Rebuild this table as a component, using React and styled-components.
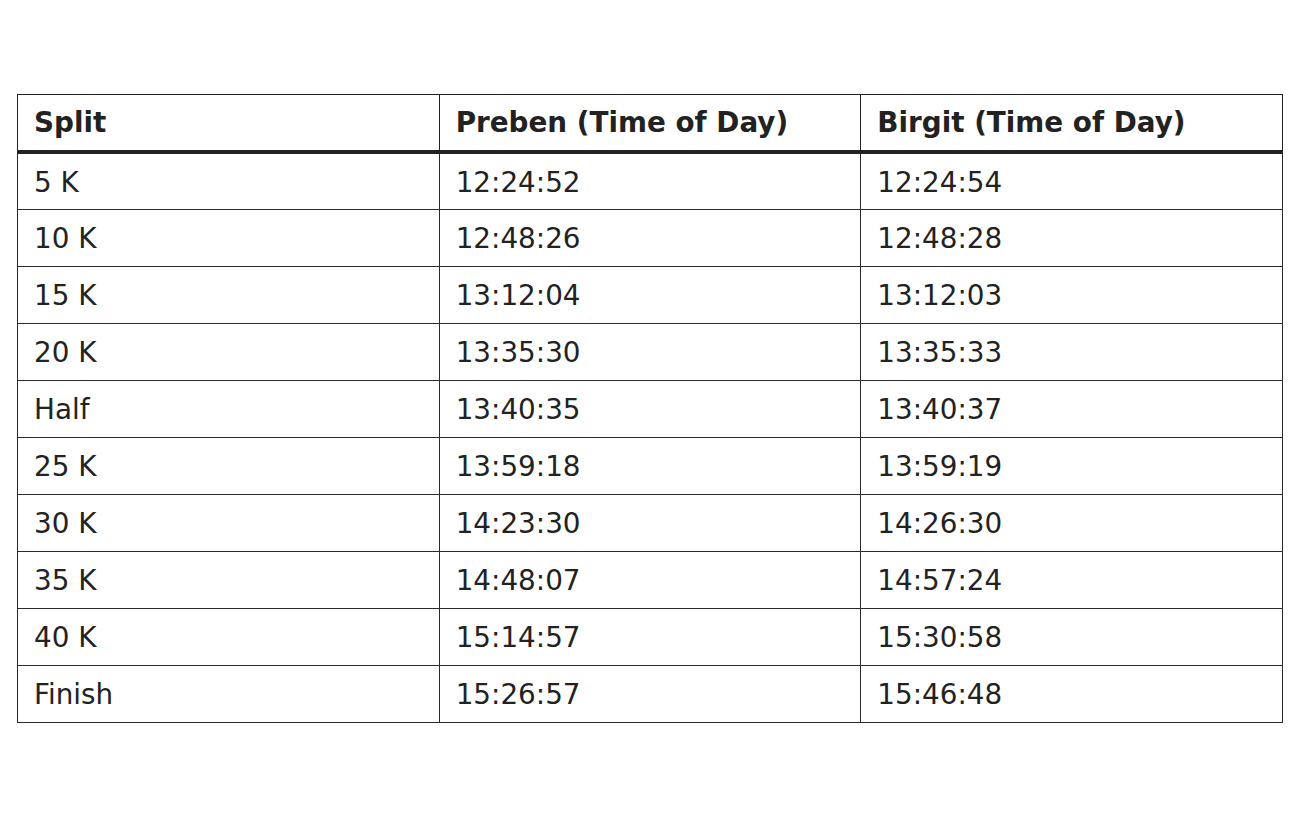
import React from 'react';
import styled, { createGlobalStyle } from 'styled-components';

const GlobalStyle = createGlobalStyle`
  html, body {
    margin: 0;
    padding: 0;
    background: #ffffff;
  }
  body {
    font-family: "DejaVu Sans", Verdana, sans-serif;
    color: #222222;
  }
`;

const splits = [
  ['5 K', '12:24:52', '12:24:54'],
  ['10 K', '12:48:26', '12:48:28'],
  ['15 K', '13:12:04', '13:12:03'],
  ['20 K', '13:35:30', '13:35:33'],
  ['Half', '13:40:35', '13:40:37'],
  ['25 K', '13:59:18', '13:59:19'],
  ['30 K', '14:23:30', '14:26:30'],
  ['35 K', '14:48:07', '14:57:24'],
  ['40 K', '15:14:57', '15:30:58'],
  ['Finish', '15:26:57', '15:46:48'],
];

const Page = styled.div`
  padding: 94px 17px 0;
  height: 817px;
  box-sizing: border-box;
`;

const Table = styled.table`
  width: 100%;
  border-collapse: collapse;
  table-layout: fixed;
  border: 1px solid #222222;
`;

const HeadCell = styled.th`
  text-align: left;
  font-size: 27.8px;
  font-weight: bold;
  height: 55px;
  padding: 0 16px;
  border: 1px solid #222222;
  border-bottom: 4px solid #222222;
  vertical-align: middle;
`;

const Row = styled.tr`
  height: 57px;
`;

const Cell = styled.td`
  font-size: 27.8px;
  padding: 2px 16px 0;
  border: 1px solid #2b2b2b;
  vertical-align: middle;
  white-space: nowrap;
`;

export default function App() {
  return (
    <Page>
      <GlobalStyle />
      <Table>
        <thead>
          <tr>
            <HeadCell>Split</HeadCell>
            <HeadCell>Preben (Time of Day)</HeadCell>
            <HeadCell>Birgit (Time of Day)</HeadCell>
          </tr>
        </thead>
        <tbody>
          {splits.map(([split, preben, birgit]) => (
            <Row key={split}>
              <Cell>{split}</Cell>
              <Cell>{preben}</Cell>
              <Cell>{birgit}</Cell>
            </Row>
          ))}
        </tbody>
      </Table>
    </Page>
  );
}
